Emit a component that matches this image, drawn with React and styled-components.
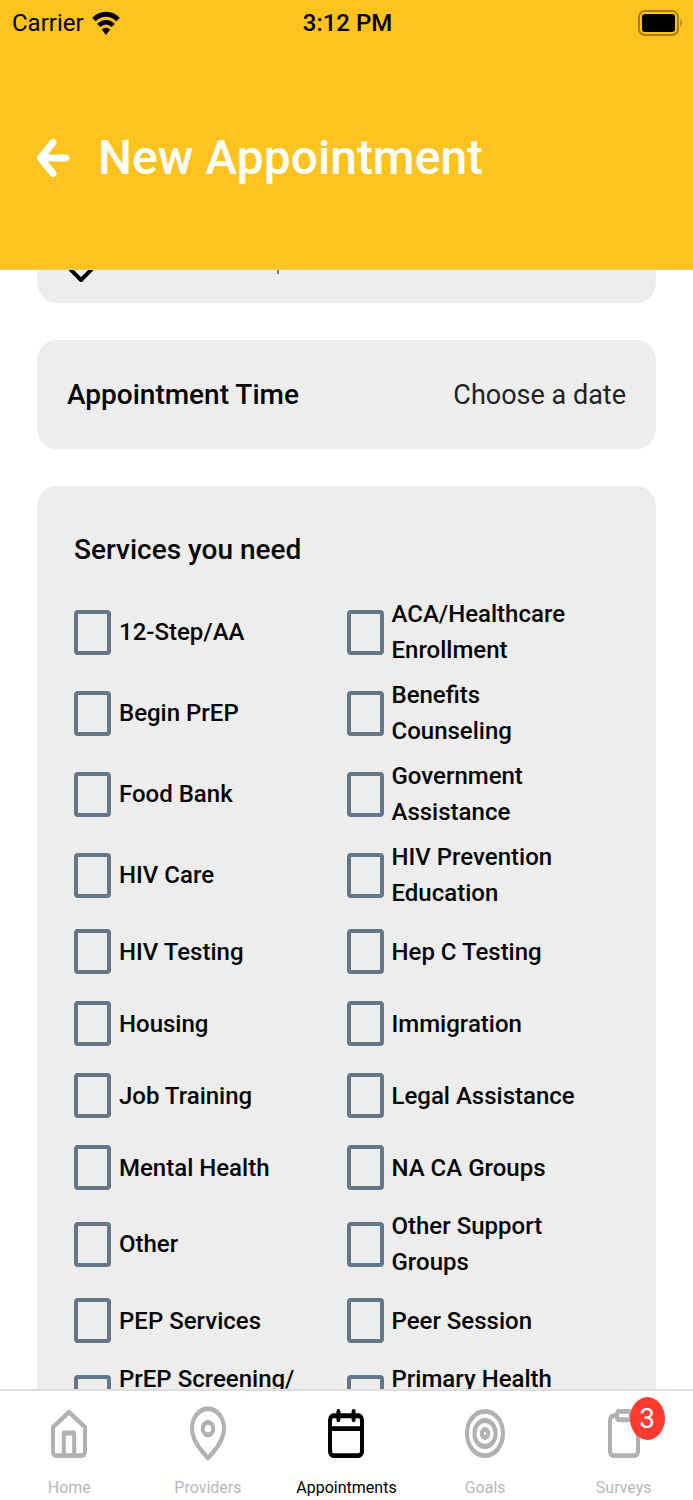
import React, { useState } from 'react'
import styled, { createGlobalStyle } from 'styled-components'

const SERVICES = [
    ['12-Step/AA', 'ACA/Healthcare Enrollment'],
    ['Begin PrEP', 'Benefits Counseling'],
    ['Food Bank', 'Government Assistance'],
    ['HIV Care', 'HIV Prevention Education'],
    ['HIV Testing', 'Hep C Testing'],
    ['Housing', 'Immigration'],
    ['Job Training', 'Legal Assistance'],
    ['Mental Health', 'NA CA Groups'],
    ['Other', 'Other Support Groups'],
    ['PEP Services', 'Peer Session'],
    ['PrEP Screening/ Navigation', 'Primary Health Care'],
]

const TABS = [
    {
        name: 'Home',
        icon: (
            <>
                <path d="M4 9.4 12 3.3l8 6.1V19.5A1.5 1.5 0 0 1 18.5 21h-13A1.5 1.5 0 0 1 4 19.5z" />
                <path d="M9.4 21v-9.2h5.2V21" />
            </>
        ),
    },
    {
        name: 'Providers',
        icon: (
            <>
                <path d="M12 22C9 19.4 4 15 4 10a8 8.1 0 0 1 16 0c0 5-5 9.4-8 12z" />
                <circle cx="12" cy="10" r="2.6" />
            </>
        ),
    },
    {
        name: 'Appointments',
        icon: (
            <>
                <rect x="4" y="4.8" width="16" height="16.2" rx="1.8" />
                <path d="M8.2 3v3.4M15.8 3v3.4M4 10h16" />
            </>
        ),
    },
    {
        name: 'Goals',
        icon: (
            <>
                <circle cx="12" cy="12" r="9" />
                <circle cx="12" cy="12" r="5.3" />
                <circle cx="12" cy="12" r="1.6" />
            </>
        ),
    },
    {
        name: 'Surveys',
        badge: 3,
        icon: (
            <>
                <path d="M8.6 4.8H6.8A1.8 1.8 0 0 0 5 6.6v12.6A1.8 1.8 0 0 0 6.8 21h10.4a1.8 1.8 0 0 0 1.8-1.8V6.6a1.8 1.8 0 0 0-1.8-1.8h-1.8" />
                <rect x="8.6" y="3" width="6.8" height="3.4" rx="0.8" />
            </>
        ),
    },
]

function App() {
    const [checked, setChecked] = useState({})

    const toggle = (service) => {
        setChecked({ ...checked, [service]: !checked[service] })
    }

    return (
        <Screen>
            <GlobalStyle />
            <Header>
                <StatusBar>
                    <Carrier>
                        Carrier
                        <svg width="28" height="24" viewBox="0 0 28 24" aria-hidden="true">
                            <path d="M2 8.6C8.6 1.4 19.4 1.4 26 8.6" fill="none" stroke="#000" strokeWidth="5" />
                            <path d="M6.8 14.6c4-4.4 10.4-4.4 14.4 0" fill="none" stroke="#000" strokeWidth="4.4" />
                            <path d="M10 18.8c2.2-2.6 5.8-2.6 8 0L14 24z" />
                        </svg>
                    </Carrier>
                    <Clock>3:12 PM</Clock>
                    <Battery>
                        <svg width="45" height="26" viewBox="0 0 45 26" aria-hidden="true">
                            <rect x="1" y="1" width="39" height="24" rx="6" fill="none" stroke="#a47e14" strokeWidth="2" />
                            <rect x="4" y="4" width="33" height="18" rx="3" />
                            <path d="M42.5 9c2 1.6 2 6.400 0 8z" fill="#a47e14" />
                        </svg>
                    </Battery>
                </StatusBar>
                <TitleRow>
                    <BackButton aria-label="Back">
                        <svg width="34" height="40" viewBox="0 0 34 40" fill="none" stroke="#fff" strokeWidth="7" strokeLinecap="round" strokeLinejoin="round" aria-hidden="true">
                            <path d="M30 20H5M17 4.500 4.500 20 17 35.500" />
                        </svg>
                    </BackButton>
                    <Title>New Appointment</Title>
                </TitleRow>
            </Header>

            <Content>
                <PickerCard aria-label="Open list">
                    <svg width="24" height="14" viewBox="0 0 24 14" fill="none" stroke="#000" strokeWidth="4" strokeLinejoin="round" aria-hidden="true">
                        <path d="M1-1l11 11L23-1" />
                    </svg>
                    <Tick />
                </PickerCard>

                <TimeCard>
                    <TimeLabel>Appointment Time</TimeLabel>
                    <DateButton>Choose a date</DateButton>
                </TimeCard>

                <ServicesCard>
                    <ServicesTitle>Services you need</ServicesTitle>
                    {SERVICES.map((row) => (
                        <ServiceRow key={row[0]}>
                            {row.map((service) => (
                                <Service key={service}>
                                    <CheckBox
                                        type="checkbox"
                                        checked={!!checked[service]}
                                        onChange={() => toggle(service)}
                                    />
                                    <span>{service}</span>
                                </Service>
                            ))}
                        </ServiceRow>
                    ))}
                </ServicesCard>
            </Content>

            <TabBar>
                {TABS.map((tab) => (
                    <Tab key={tab.name} href={'#' + tab.name.toLowerCase()} $active={tab.name === 'Appointments'}>
                        <TabIcon>
                            <svg width="48" height="59" viewBox="0 0 24 24" preserveAspectRatio="none" fill="none" strokeWidth="2" strokeLinecap="round" strokeLinejoin="round" aria-hidden="true">
                                {tab.icon}
                            </svg>
                            {tab.badge && <Badge>{tab.badge}</Badge>}
                        </TabIcon>
                        <TabName>{tab.name}</TabName>
                    </Tab>
                ))}
            </TabBar>
        </Screen>
    )
}

export default App

const GlobalStyle = createGlobalStyle`
    * {
        box-sizing:border-box;
    }
    body {
        margin:0;
        background-color:#fff;
        font-family:Roboto, "Liberation Sans", sans-serif;
        color:#060606;
    }
    button {
        padding:0;
        border:0;
        background:none;
        font:inherit;
        color:inherit;
        cursor:pointer;
    }
    svg {
        display:block;
        flex:none;
    }
`;

const Screen = styled.div`
    display:flex;
    flex-direction:column;
    height:100vh;
`;

const Header = styled.header`
    flex:none;
    background-color:#fec31e;
    border-bottom:1px solid #e3c882;
`;

const StatusBar = styled.div`
    display:grid;
    grid-template-columns:1fr auto 1fr;
    align-items:center;
    height:46px;
    padding:0 10px 0 12px;
    color:#000;
`;

const Carrier = styled.div`
    display:flex;
    align-items:center;
    gap:8px;
    font-size:24px;
`;

const Clock = styled.div`
    font-size:24px;
    font-weight:500;
`;

const Battery = styled.div`
    display:flex;
    justify-content:flex-end;
`;

const TitleRow = styled.div`
    display:flex;
    align-items:center;
    gap:28px;
    height:223px;
    padding:0 36px;
`;

const BackButton = styled.button`
    flex:none;
`;

const Title = styled.h1`
    margin:0;
    font-size:48px;
    font-weight:500;
    color:#fff;
`;

const Content = styled.main`
    flex:1;
    min-height:0;
    display:flex;
    flex-direction:column;
    gap:37px;
    padding:0 37px;
    overflow:hidden;
`;

const Card = styled.section`
    flex:none;
    background-color:#ededed;
    border-radius:18px / 22px;
`;

const PickerCard = styled.button`
    flex:none;
    display:flex;
    align-items:flex-start;
    gap:170px;
    height:33px;
    padding:0 32px;
    && {
        background-color:#ededed;
    }
    border-radius:0 0 18px 18px / 0 0 22px 22px;
`;

const Tick = styled.span`
    width:2px;
    height:4px;
    margin-left:14px;
    background-color:#7c8190;
`;

const TimeCard = styled(Card)`
    display:flex;
    align-items:center;
    justify-content:space-between;
    height:109px;
    padding:0 30px;
    font-size:27px;
`;

const TimeLabel = styled.span`
    font-size:28px;
    font-weight:500;
`;

const DateButton = styled.button`
    color:#222;
`;

const ServicesCard = styled(Card)`
    padding:44px 37px;
`;

const ServicesTitle = styled.h2`
    margin:0 0 22px;
    font-size:28px;
    line-height:40px;
    font-weight:500;
`;

const ServiceRow = styled.div`
    display:grid;
    grid-template-columns:1fr 1fr;
    align-items:center;
    min-height:72px;
    padding:4px 0 5px;
`;

const Service = styled.label`
    display:flex;
    align-items:center;
    gap:8px;
    padding-right:24px;
    font-size:24px;
    line-height:36px;
    font-weight:500;
    cursor:pointer;
`;

const CheckBox = styled.input`
    appearance:none;
    flex:none;
    width:37px;
    height:45px;
    margin:0;
    border:4px solid #637788;
    border-radius:4px;
    &:checked {
        background-color:#637788;
    }
`;

const TabBar = styled.nav`
    flex:none;
    display:grid;
    grid-template-columns:repeat(5, 1fr);
    height:111px;
    background-color:#fff;
    border-top:2px solid #dedede;
`;

const Tab = styled.a`
    display:flex;
    flex-direction:column;
    align-items:center;
    gap:14px;
    padding-top:13px;
    text-decoration:none;
    color:${(props) => (props.$active ? '#000' : '#b8b8b8')};
    svg {
        stroke:${(props) => (props.$active ? '#000' : '#b1b1b1')};
    }
`;

const TabIcon = styled.span`
    position:relative;
`;

const Badge = styled.span`
    position:absolute;
    top:-7px;
    left:30px;
    display:flex;
    align-items:center;
    justify-content:center;
    width:35px;
    height:43px;
    border-radius:50%;
    background-color:#ff3b30;
    color:#fff;
    font-size:28px;
`;

const TabName = styled.span`
    font-size:16px;
    line-height:22px;
`;
